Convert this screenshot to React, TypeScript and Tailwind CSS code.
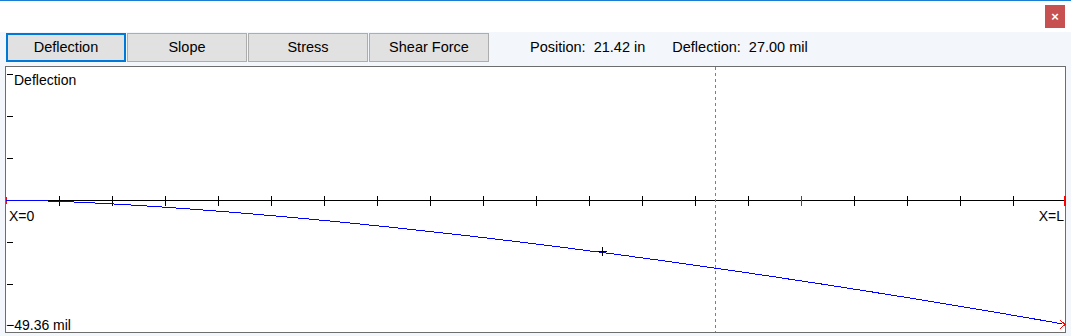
import React from "react";

const tabs = ["Deflection", "Slope", "Stress", "Shear Force"];

// inner plot box is 1060 x 265
const W = 1060;
const H = 265;
const AXIS_Y = 133;

function curvePoints() {
    const pts: string[] = [];
    for (let x = 0; x <= 1057; x += 3) {
        const t = x / 1057;
        const y = AXIS_Y + 124 * Math.pow(t, 1.5);
        pts.push(`${x},${y.toFixed(1)}`);
    }
    return pts.join(" ");
}

function Plot() {
    const ticks = Array.from({ length: 19 }, (_, i) => (i + 1) * 53);
    const sideMarks = [7, 49, 91, 175, 217];

    return (
        <div className="relative mx-[5px] h-[267px] border border-[#6d6d6d] bg-white">
            <svg width={W} height={H} className="absolute left-0 top-0" shapeRendering="crispEdges">
                {/* x axis */}
                <line x1={0} y1={AXIS_Y + 0.5} x2={W} y2={AXIS_Y + 0.5} stroke="#000" strokeWidth={1} />
                {ticks.map((x) => (
                    <line
                        key={x}
                        x1={x + 0.5}
                        y1={AXIS_Y - 4}
                        x2={x + 0.5}
                        y2={AXIS_Y + 6}
                        stroke={x === 795 ? "#ff0000" : "#000"}
                        strokeWidth={1}
                    />
                ))}
                <line x1={0.5} y1={AXIS_Y - 3} x2={0.5} y2={AXIS_Y + 4} stroke="#ff0000" strokeWidth={1} />
                <line x1={W - 1} y1={AXIS_Y - 4} x2={W - 1} y2={AXIS_Y + 6} stroke="#ff0000" strokeWidth={2} />

                {/* y marks */}
                {sideMarks.map((y) => (
                    <line key={y} x1={1} y1={y + 0.5} x2={7} y2={y + 0.5} stroke="#000" strokeWidth={1} />
                ))}

                {/* cursor */}
                <line
                    x1={709.5}
                    y1={0}
                    x2={709.5}
                    y2={H}
                    stroke="#e05555"
                    strokeWidth={1}
                    strokeDasharray="3 3"
                />

                {/* deflection curve */}
                <polyline points={curvePoints()} fill="none" stroke="#0000ff" strokeWidth={1} />

                {/* marker */}
                <line x1={592} y1={184.5} x2={601} y2={184.5} stroke="#000" strokeWidth={1} />
                <line x1={596.5} y1={180} x2={596.5} y2={189} stroke="#000" strokeWidth={1} />

                {/* end arrow */}
                <polyline points="1054,253 1059,257.5 1054,262" fill="none" stroke="#ff0000" strokeWidth={1} />
            </svg>

            <span className="absolute left-[8px] top-[5px] text-[14px] leading-[16px] text-black">Deflection</span>
            <span className="absolute left-[3px] top-[141px] text-[14px] leading-[16px] text-black">X=0</span>
            <span className="absolute right-[1px] top-[141px] text-[14px] leading-[16px] text-black">X=L</span>
            <span className="absolute left-[0px] top-[250px] text-[14px] leading-[16px] text-black">−49.36 mil</span>
        </div>
    );
}

export default function App() {
    return (
        <div
            className="w-[1071px] h-[336px] flex flex-col bg-[#f3f6fb] border-t border-[#1a7fd4] overflow-hidden"
            style={{ fontFamily: '"Liberation Sans", Arial, sans-serif' }}
        >
            {/* Title bar */}
            <div className="h-[31px] bg-white flex items-start justify-end pr-[6px] pt-[4px] shrink-0">
                <button className="w-[20px] h-[23px] bg-[#c75050] text-white flex items-center justify-center text-[13px] font-bold leading-none">
                    ×
                </button>
            </div>

            {/* Toolbar */}
            <div className="h-[34px] flex items-start pt-[1px] pl-[6px] shrink-0">
                <div className="flex gap-[1px]">
                    {tabs.map((tab, i) => (
                        <button
                            key={tab}
                            className={`w-[120px] h-[29px] bg-[#e1e1e1] text-[14.5px] text-black flex items-center justify-center ${
                                i === 0 ? "border-2 border-[#0078d7]" : "border border-[#adadad]"
                            }`}
                        >
                            {tab}
                        </button>
                    ))}
                </div>
                <div className="flex items-center h-[29px] ml-[41px] text-[14.5px] text-black gap-[27px]">
                    <span className="whitespace-pre">Position:  21.42 in</span>
                    <span className="whitespace-pre">Deflection:  27.00 mil</span>
                </div>
            </div>

            <Plot />
        </div>
    );
}
